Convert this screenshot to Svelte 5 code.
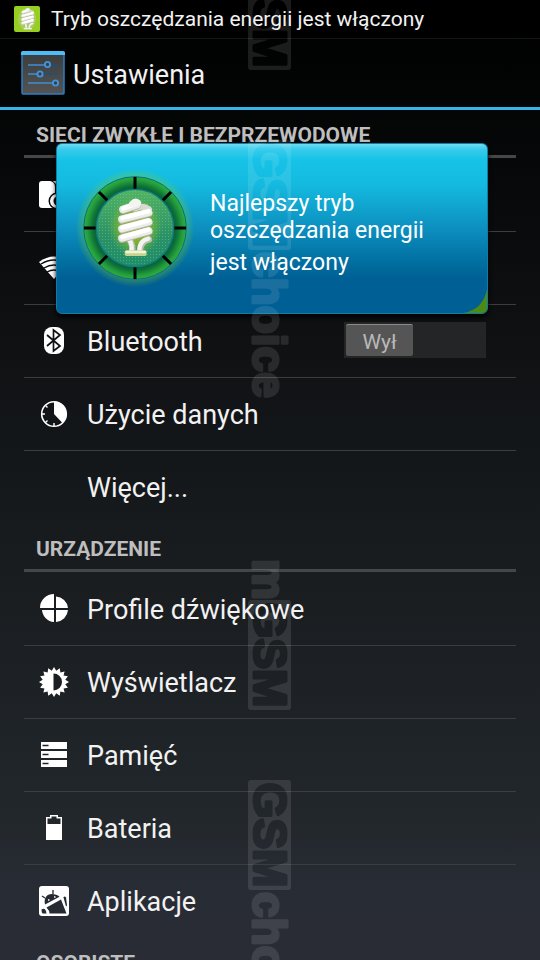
<script>
  const sections = [
    {
      title: 'SIECI ZWYKŁE I BEZPRZEWODOWE',
      rows: [
        { icon: 'sim', name: 'Karty SIM' },
        { icon: 'wifi', name: 'Wi-Fi' },
        { icon: 'bluetooth', label: 'Bluetooth', toggle: true },
        { icon: 'usage', label: 'Użycie danych' },
        { icon: 'none', label: 'Więcej...' }
      ]
    },
    {
      title: 'URZĄDZENIE',
      rows: [
        { icon: 'profiles', label: 'Profile dźwiękowe' },
        { icon: 'display', label: 'Wyświetlacz' },
        { icon: 'storage', label: 'Pamięć' },
        { icon: 'battery', label: 'Bateria' },
        { icon: 'apps', label: 'Aplikacje' }
      ]
    },
    { title: 'OSOBISTE', rows: [] }
  ];

  let bluetoothOn = $state(false);

  const star = Array.from({ length: 32 }, (_, i) => {
    const r = i % 2 ? 11.5 : 15;
    const a = (i * Math.PI) / 16 - Math.PI / 2;
    return `${(16 + r * Math.cos(a)).toFixed(2)},${(16 + r * Math.sin(a)).toFixed(2)}`;
  }).join(' ');
</script>

{#snippet bulb()}
  <g fill="none" stroke-linecap="round" stroke-linejoin="round">
    <path d="M165 212 Q175 228 171 245 M222 208 Q195 214 195 244" stroke="#b9beb0" stroke-width="19" />
    <path d="M164 210 Q173 228 169 243 M220 206 Q193 212 193 242" stroke="#f2f3ee" stroke-width="13" />
    <path d="M180 116 Q205 104 222 118" stroke="#d9d9d4" stroke-width="18" />
    {#each [[144, 120, 186, 106], [141, 149, 221, 129], [141, 178, 221, 157], [141, 206, 221, 184]] as [x1, y1, x2, y2]}
      <path d="M{x1} {y1} L{x2} {y2}" stroke="#b9bab2" stroke-width="24" />
      <path d="M{x1} {y1 - 2} L{x2} {y2 - 2}" stroke="#ececea" stroke-width="22" />
      <path d="M{x1 + 1} {y1 - 5} L{x2 - 1} {y2 - 5}" stroke="#fff" stroke-width="13" />
    {/each}
    <path d="M172 102 Q181 92 188 98" stroke="#f4f4f2" stroke-width="20" />
  </g>
  <rect x="149" y="241" width="66" height="17" rx="5" fill="#c5d38f" />
  <rect x="151" y="242" width="62" height="8" rx="4" fill="#f0f4d8" />
{/snippet}

{#snippet icon(kind)}
  <svg class="icon" viewBox="0 0 32 32" aria-hidden="true">
    {#if kind === 'sim'}
      <path d="M4 2h8q5 1 5 6v21H4q-3 0-3-3V5q0-3 3-3z" fill="#fff" />
      <circle cx="19" cy="22" r="8.500" fill="#0b0c0d" />
      <circle cx="19" cy="22" r="7" fill="#fff" />
      <circle cx="20" cy="22" r="4.500" fill="#0b0c0d" />
      <path d="M15 2h5v5z" fill="#fff" />
    {:else if kind === 'wifi'}
      <path d="M1 10Q16-1 31 10L16 27z" fill="#fff" />
      <path d="M3 12q13-8 26 0M6 16q10-6 20 0M9 20q7-4 14 0" fill="none" stroke="#0c0d0e" stroke-width="1.400" />
    {:else if kind === 'bluetooth'}
      <rect x="6" y="2" width="20" height="27" rx="8" fill="#fff" />
      <path d="M9 10l13 11-6.500 5V5l6.500 5L9 21" fill="none" stroke="#111214" stroke-width="1.700" />
    {:else if kind === 'usage'}
      <circle cx="16" cy="16" r="12.300" fill="none" stroke="#fff" stroke-width="1.600" />
      <path d="M16 16V3.500A12.500 12.500 0 0 1 24.500 25z" fill="#fff" />
      <path d="M16 25v3M4 16h3M7.500 7.500l2 2M7.500 24.500l2-2" stroke="#fff" stroke-width="1.400" />
    {:else if kind === 'profiles'}
      <path d="M16 15H2A14 14 0 0 1 16 1zM18 15V3.500A13 13 0 0 1 30 15zM16 17v12A13 13 0 0 1 4 17zM18 17h12A13 13 0 0 1 18 29z" fill="#fff" />
    {:else if kind === 'display'}
      <polygon points={star} fill="#fff" />
      <path d="M15.500 7.500a8.500 8.500 0 0 1 0 17z" fill="#1b1e22" />
    {:else if kind === 'storage'}
      <path d="M3 3h26v7H3zM3 12h26v7H3zM3 21h26v7H3z" fill="#fff" />
      <path d="M4.500 6.500h6M4.500 15.500h6M4.500 24.500h6" stroke="#202428" stroke-width="1.600" />
    {:else if kind === 'battery'}
      <path d="M8 5h4V3h8v2h4v23H8z" fill="#fff" />
      <path d="M9.500 6.500h4v-2h5v2h4V12h-13z" fill="#22272a" />
    {:else if kind === 'apps'}
      <rect x="1" y="1" width="30" height="30" rx="3" fill="#fff" />
      <g fill="#262a31">
        <path d="M7 19.500C5.500 13 9 9 13.600 9q5 0 7.900 2.700z" />
        <path d="M8.500 22.500L23 14.500 28.500 28.500H11.500q0-3-3-6z" />
        <path d="M25.500 12.500q1-2 2.500 0l1 8-1 1z" />
        <path d="M3.500 24.500q3-2 4.500 1.500l.5 2.500H4.500q-1-1-1-4z" />
      </g>
      <path d="M7 13l-3-2M15 9V5" stroke="#262a31" stroke-width="1.300" />
      <path d="M10 15h1.500M16 12h1.500" stroke="#fff" stroke-width="1.500" />
    {/if}
  </svg>
{/snippet}

<div class="screen">
  <div class="status">
    <svg class="status-icon" viewBox="0 0 26 26" aria-hidden="true">
      <rect width="26" height="26" rx="2" fill="#96cf22" />
      <ellipse cx="13" cy="13" rx="9" ry="11" fill="#a9cf55" />
      <g transform="translate(-9.500 -9) scale(.128)">{@render bulb()}</g>
    </svg>
    <span>Tryb oszczędzania energii jest włączony</span>
  </div>

  <header>
    <svg class="app-icon" viewBox="0 0 44 44" aria-hidden="true">
      <defs>
        <linearGradient id="tile" x1="0" y1="0" x2="0" y2="1">
          <stop offset="0" stop-color="#3a3c3d" />
          <stop offset="1" stop-color="#545454" />
        </linearGradient>
      </defs>
      <rect x="1" y="1" width="42" height="42" rx="1" fill="url(#tile)" stroke="#2b7fc4" stroke-width="1.500" />
      <path d="M0 2q0-2 2-2h40q2 0 2 2v2H0z" fill="#4fbcf5" />
      <path d="M7 14h17M7 23h9M7 32h25" stroke="#3f8fd6" stroke-width="1.600" />
      <path d="M29 14h8M22 23h15" stroke="#1e4f7c" stroke-width="1.600" />
      <g fill="#3c3f42" stroke="#4094dc" stroke-width="1.900">
        <circle cx="26.500" cy="13.500" r="2.600" />
        <circle cx="19" cy="23" r="2.600" />
        <circle cx="34.500" cy="32" r="2.600" />
      </g>
    </svg>
    <h1>Ustawienia</h1>
  </header>

  <main>
    {#each sections as section}
      <section>
        <h2>{section.title}</h2>
        <ul>
          {#each section.rows as row}
            <li>
              <a href="#{row.icon}" aria-label={row.name}>
                {@render icon(row.icon)}
                {#if row.label}<span>{row.label}</span>{/if}
              </a>
              {#if row.toggle}
                <button
                  class="switch"
                  class:on={bluetoothOn}
                  role="switch"
                  aria-checked={bluetoothOn}
                  aria-label="Bluetooth"
                  onclick={() => (bluetoothOn = !bluetoothOn)}
                >
                  <span class="thumb">{bluetoothOn ? 'Wł' : 'Wył'}</span>
                </button>
              {/if}
            </li>
          {/each}
        </ul>
      </section>
    {/each}
  </main>

  <div class="toast" role="status">
    <svg class="dial" viewBox="0 0 360 360" aria-hidden="true">
      <defs>
        <radialGradient id="halo">
          <stop offset=".84" stop-color="#7ed321" stop-opacity=".4" />
          <stop offset="1" stop-color="#7ed321" stop-opacity="0" />
        </radialGradient>
        <radialGradient id="ring">
          <stop offset=".74" stop-color="#0a5c34" />
          <stop offset=".82" stop-color="#0c7038" />
          <stop offset=".93" stop-color="#259f3b" />
          <stop offset="1" stop-color="#2fae3e" />
        </radialGradient>
        <linearGradient id="disc" x1="0" y1="0" x2="0" y2="1">
          <stop offset="0" stop-color="#52b464" />
          <stop offset=".6" stop-color="#2a9168" />
          <stop offset="1" stop-color="#1f8e68" />
        </linearGradient>
        <radialGradient id="glow">
          <stop offset="0" stop-color="#a3ad14" />
          <stop offset=".5" stop-color="#94b820" stop-opacity=".8" />
          <stop offset="1" stop-color="#6fbf3c" stop-opacity="0" />
        </radialGradient>
        <pattern id="dots" width="9" height="9" patternUnits="userSpaceOnUse">
          <rect width="3" height="3" fill="#8ed488" opacity=".4" />
        </pattern>
      </defs>
      <circle cx="180" cy="174" r="178" fill="url(#halo)" />
      <circle cx="180" cy="174" r="154" fill="url(#ring)" stroke="#0a6f86" stroke-width="3" />
      <circle cx="180" cy="174" r="116" fill="url(#disc)" stroke="#0f7d85" stroke-width="4" />
      <circle cx="180" cy="174" r="112" fill="url(#dots)" />
      <ellipse cx="180" cy="170" rx="82" ry="90" fill="url(#glow)" />
      <g stroke="#000" stroke-width="9">
        {#each [0, 45, 90, 135, 180, 225, 270, 315] as angle}
          <path d="M180 21V56" transform="rotate({angle} 180 174)" />
        {/each}
      </g>
      {@render bulb()}
    </svg>
    <div class="message">
      <p>Najlepszy tryb<br />oszczędzania energii</p>
      <p>jest włączony</p>
    </div>
    <svg class="corner" viewBox="0 0 24 24" aria-hidden="true">
      <path d="M24 0V24H0Q20 21 24 0z" fill="#4d8a15" />
    </svg>
  </div>

  <svg class="watermark" viewBox="0 0 43 960" aria-hidden="true">
    <defs>
      <mask id="cut" maskUnits="userSpaceOnUse" x="0" y="0" width="110" height="43">
        <rect width="110" height="43" rx="3" fill="#fff" />
        <text x="55" y="37" text-anchor="middle" stroke="#000">GSM</text>
      </mask>
    </defs>
    {#each [-40, 140, 600, 780] as y}
      <g transform="translate(43 {y}) rotate(90)">
        <rect width="110" height="43" mask="url(#cut)" fill="#fff" />
      </g>
    {/each}
    <g fill="#fff" stroke="#fff">
      <text transform="translate(5 600) rotate(90)" text-anchor="end">m</text>
      <text transform="translate(5 252) rotate(90)">choice</text>
      <text transform="translate(5 892) rotate(90)">choice</text>
    </g>
  </svg>
</div>

<style>
  :global(body) {
    margin: 0;
    background: #000;
  }
  .screen {
    position: relative;
    height: 100vh;
    overflow: hidden;
    font-family: Roboto, "Noto Sans", sans-serif;
    color: #f2f2f2;
    background: linear-gradient(#000 0, #020303 8%, #0d0e10 30%, #171b1e 56%, #22272b 85%, #282c35 93%, #292c35 100%);
  }
  .status {
    display: flex;
    align-items: center;
    gap: 11px;
    height: 38px;
    padding: 0 14px;
    background: #000;
    border-bottom: 1px solid #161616;
    font-size: 21px;
    white-space: nowrap;
  }
  .status-icon {
    width: 26px;
    height: 26px;
  }
  header {
    display: flex;
    align-items: center;
    gap: 8px;
    height: 68px;
    padding: 0 21px;
    border-bottom: 3px solid #33b5e5;
  }
  .app-icon {
    width: 44px;
    height: 44px;
  }
  h1 {
    margin: 0;
    padding-top: 4px;
    font-size: 27px;
    font-weight: 400;
  }
  main {
    padding: 0 24px;
  }
  h2 {
    box-sizing: border-box;
    height: 48px;
    margin: 0 0 1px;
    padding: 0 12px;
    border-bottom: 3px solid #444648;
    font-size: 21px;
    line-height: 50px;
    font-weight: 700;
    color: #bebebe;
    white-space: nowrap;
  }
  ul {
    margin: 0;
    padding: 0;
    list-style: none;
  }
  li {
    display: flex;
    align-items: center;
    height: 72px;
    padding-right: 30px;
    border-bottom: 1px solid #3b3e41;
  }
  li:last-child {
    border-color: transparent;
  }
  a {
    display: flex;
    flex: 1;
    align-items: center;
    gap: 17px;
    padding-left: 14px;
    color: inherit;
    font-size: 27px;
    text-decoration: none;
  }
  a span {
    padding-top: 2px;
  }
  .icon {
    width: 32px;
    height: 32px;
  }
  .switch {
    display: flex;
    width: 142px;
    height: 36px;
    margin-bottom: 2px;
    padding: 2px;
    border: 0;
    background: #242526;
    font-family: inherit;
  }
  .switch.on {
    justify-content: flex-end;
  }
  .thumb {
    box-sizing: border-box;
    width: 67px;
    height: 32px;
    border-top: 1px solid #8a8a8a;
    border-radius: 2px;
    background: #555;
    color: #b8b8b8;
    font-size: 21px;
    line-height: 34px;
    text-align: center;
  }
  .toast {
    position: absolute;
    top: 143px;
    left: 56px;
    right: 52px;
    box-sizing: border-box;
    display: flex;
    align-items: center;
    gap: 15px;
    height: 171px;
    padding: 3px 18px 0;
    border: 1px solid #0c7ea6;
    border-radius: 6px;
    overflow: hidden;
    background: linear-gradient(#6fdcf2 0, #3accec 3%, #17c3e7 9%, #14badf 24%, #0d92c2 48%, #0375a6 66%, #005f94 80%, #005f95 100%);
    box-shadow: 0 3px 5px #000;
    color: #fff;
    font-size: 23px;
    line-height: 27px;
  }
  .dial {
    flex: none;
    width: 120px;
    height: 120px;
  }
  .message {
    padding-top: 10px;
  }
  p {
    margin: 0 0 5px;
  }
  .corner {
    position: absolute;
    right: 0;
    bottom: 0;
    width: 24px;
    height: 24px;
  }
  .watermark {
    position: absolute;
    top: 0;
    left: 248px;
    width: 43px;
    height: 960px;
    opacity: .1;
    pointer-events: none;
    font-family: "Liberation Sans", Arial, sans-serif;
    font-size: 46px;
    font-weight: 700;
    stroke-width: 3px;
    stroke-linejoin: round;
  }
</style>
